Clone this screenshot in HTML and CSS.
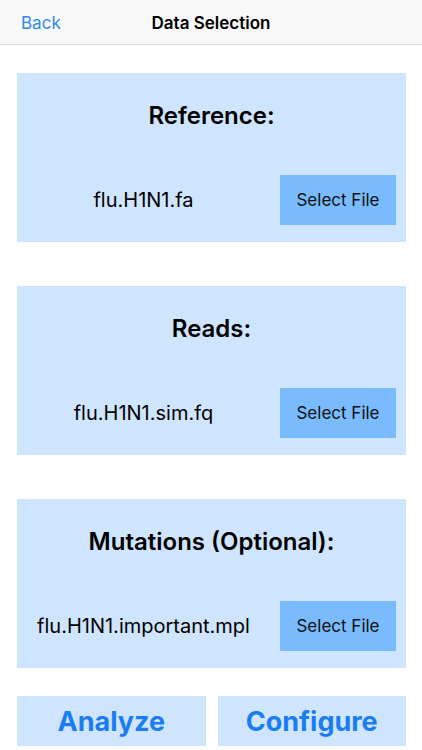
FILE: index.html
```html
<!DOCTYPE html>
<html lang="en">
<head>
	<meta charset="UTF-8">
	<meta name="viewport" content="width=device-width, initial-scale=1.0">
	<title>Data Selection</title>
	<link rel="stylesheet" href="styles.css">
</head>
<body>
	<header class="nav">
		<a class="nav-back">Back</a>
		<h1 class="nav-title">Data Selection</h1>
	</header>
	<main class="content">
		<section class="panel">
			<h2 class="panel-title">Reference:</h2>
			<div class="panel-row">
				<span class="file-name">flu.H1N1.fa</span>
				<button class="select-btn">Select File</button>
			</div>
		</section>
		<section class="panel">
			<h2 class="panel-title">Reads:</h2>
			<div class="panel-row">
				<span class="file-name">flu.H1N1.sim.fq</span>
				<button class="select-btn">Select File</button>
			</div>
		</section>
		<section class="panel">
			<h2 class="panel-title">Mutations (Optional):</h2>
			<div class="panel-row">
				<span class="file-name">flu.H1N1.important.mpl</span>
				<button class="select-btn">Select File</button>
			</div>
		</section>
		<div class="actions">
			<button class="action-btn">Analyze</button>
			<button class="action-btn">Configure</button>
		</div>
	</main>
</body>
</html>
```

FILE: styles.css
```css
* {
	box-sizing: border-box;
}
body {
	margin: 0;
	background: #fff;
	font-family: Inter, "Noto Sans", "Liberation Sans", sans-serif;
	color: #000;
}
/* 상단 네비게이션 바 */
.nav {
	height: 45px;
	background: #f8f8f8;
	border-bottom: 1px solid #dcdcdc;
	display: flex; align-items: center; justify-content: center;
	padding-top: 2px;
	position: relative;
}
.nav-back {
	position: absolute; left: 21px; top: 13px;
	font-size: 17px; color: #2f88ef;
}
.nav-title {
	margin: 0;
	font-size: 17px; font-weight: 600;
}
.content {
	padding: 28px 16px 0 17px;
	display: flex; flex-direction: column;
}
.panel {
	height: 169px;
	background: #cfe4fd;
	display: flex; flex-direction: column;
	margin-bottom: 44px;
}
.panel:nth-of-type(3) {
	margin-bottom: 28px;
}
.panel-title {
	margin: 0; padding-top: 28px;
	line-height: 30px;
	font-size: 24px; font-weight: 600;
	text-align: center;
}
.panel-row {
	margin-top: auto;
	padding: 0 10px 17px 0;
	display: flex; align-items: center; gap: 10px;
}
.file-name {
	flex: 1;
	text-align: center;
	font-size: 20px;
}
.select-btn {
	width: 116px; height: 50px;
	border: none; background: #79bbfd;
	font-family: inherit; font-size: 17px; color: #111;
}
.actions {
	display: flex; gap: 12px;
}
.action-btn {
	flex: 1; height: 50px;
	border: none; background: #cfe4fd;
	font-family: inherit; font-size: 27px; font-weight: 700;
	color: #1a7df3;
}
```
